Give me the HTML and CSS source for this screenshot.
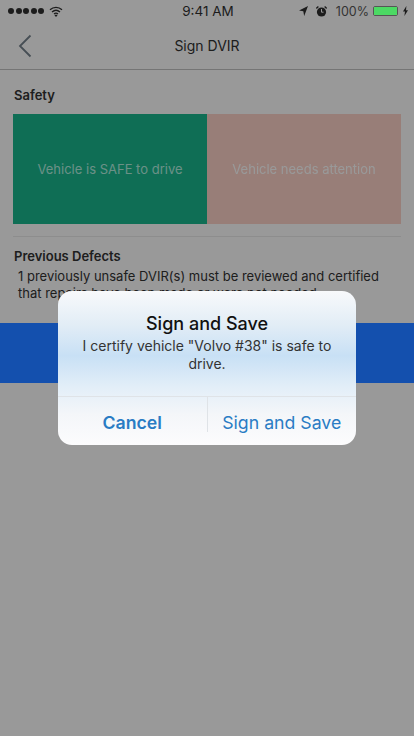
FILE: index.html
```html
<!DOCTYPE html>
<html lang="en">
<head>
  <meta charset="UTF-8">
  <meta name="viewport" content="width=device-width, initial-scale=1.0">
  <title>Sign DVIR</title>
  <link rel="stylesheet" href="styles.css">
</head>
<body>
  <div class="status-bar">
    <div class="status-left">
      <span class="signal"><i></i><i></i><i></i><i></i><i></i></span>
      <svg class="wifi" width="14" height="11" viewBox="0 0 14 11">
        <path d="M1 3.8C4.5.6 9.5.6 13 3.8M3 6c2.4-2.1 5.6-2.1 8 0M5 8c1.2-1 2.8-1 4 0" fill="none" stroke="#1c1c1c" stroke-width="1.3"/>
        <path d="M7 11 5.5 9.3c.9-.6 2.1-.6 3 0z" fill="#1c1c1c"/>
      </svg>
    </div>
    <div class="status-time">9:41 AM</div>
    <div class="status-right">
      <svg width="9" height="10" viewBox="0 0 9 10"><path d="M9 0 5.2 10 4.3 5.2 0 4.4z" fill="#1c1c1c"/></svg>
      <svg class="alarm" width="11" height="11" viewBox="0 0 11 11">
        <circle cx="5.5" cy="6" r="4.6" fill="#1c1c1c"/>
        <path d="M5.5 3v3.2h2" fill="none" stroke="#999" stroke-width="1"/>
        <path d="M.3 2.4 2.4.5M10.7 2.4 8.6.5" stroke="#1c1c1c" stroke-width="1.3"/>
      </svg>
      <span class="battery-pct">100%</span>
      <span class="battery"><span class="battery-fill"></span></span>
      <svg class="bolt" width="5" height="10" viewBox="0 0 5 10"><path d="M3.4 0 0 5.6h2L1.4 10 5 4.2H3z" fill="#1c1c1c"/></svg>
    </div>
  </div>

  <div class="page">
    <header class="nav">
      <svg class="back" width="14" height="24" viewBox="0 0 14 24"><path d="M12.5 1.5 2 12l10.5 10.5" fill="none" stroke="#76828d" stroke-width="1.8"/></svg>
      <h1>Sign DVIR</h1>
    </header>

    <section class="safety">
      <h2>Safety</h2>
      <div class="tiles">
        <div class="tile tile-safe">Vehicle is SAFE to drive</div>
        <div class="tile tile-attention"><span>Vehicle needs attention</span></div>
      </div>
    </section>

    <section class="defects">
      <h2>Previous Defects</h2>
      <p>1 previously unsafe DVIR(s) must be reviewed and certified that repairs have been made or were not needed.</p>
    </section>

    <div class="sign-bar"></div>
  </div>

  <div class="scrim">
    <div class="alert">
      <div class="alert-body">
        <h3>Sign and Save</h3>
        <p>I certify vehicle "Volvo #38" is safe to drive.</p>
      </div>
      <div class="alert-actions">
        <button class="btn-cancel">Cancel</button>
        <button class="btn-save">Sign and Save</button>
      </div>
    </div>
  </div>
</body>
</html>
```

FILE: styles.css
```css
/* Page */
html, body {
  margin: 0;
  padding: 0;
}

body {
  width: 414px;
  height: 736px;
  overflow: hidden;
  background: #fff;
  color: #333;
  font-family: Inter, "Liberation Sans", Arial, sans-serif;
}

h1, h2, h3, p {
  margin: 0;
}

/* Status bar sits above the dimmed layer */
.status-bar {
  position: relative;
  z-index: 2;
  height: 22px;
  padding: 0 6px 0 8px;
  box-sizing: border-box;
  display: grid;
  grid-template-columns: 1fr auto 1fr;
  align-items: center;
  color: #1c1c1c;
  font-size: 13.5px;
}

.status-left {
  display: flex;
  align-items: center;
  gap: 5px;
}

.signal {
  display: flex;
  gap: 1.5px;
}

.signal i {
  width: 6px;
  height: 6px;
  border-radius: 50%;
  background: #1c1c1c;
}

.status-time {
  text-align: center;
}

.status-right {
  display: flex;
  align-items: center;
  justify-content: flex-end;
}

.alarm {
  margin-left: 8px;
}

.battery-pct {
  margin-left: 9px;
  font-size: 12.5px;
  color: #333;
}

.battery {
  margin-left: 4px;
  width: 23px;
  height: 8px;
  padding: 0;
  border: 1px solid #555;
  border-radius: 2px;
  box-sizing: content-box;
}

.battery-fill {
  display: block;
  width: 100%;
  height: 100%;
  background: #4cd964;
}

.bolt {
  margin-left: 5px;
}

/* Content underneath the alert */
.nav {
  height: 47px;
  border-bottom: 1px solid #c4c4c4;
  display: flex;
  align-items: center;
  justify-content: center;
  position: relative;
}

.nav h1 {
  font-size: 14px;
  font-weight: normal;
}

.back {
  position: absolute;
  left: 18px;
  top: 12px;
}

.safety {
  padding: 17px 13px 0;
}

.safety h2,
.defects h2 {
  padding-left: 1px;
  font-size: 13px;
  font-weight: 600;
  line-height: 17px;
}

.tiles {
  display: flex;
  margin-top: 10px;
}

.tile {
  flex: 1;
  height: 110px;
  display: flex;
  align-items: center;
  justify-content: center;
  font-size: 13px;
}

.tile-safe {
  background: #19b88e;
  color: #b4f0e0;
}

.tile-attention {
  background: #fdd2c8;
  color: #fff;
}

.tile-attention span {
  filter: blur(0.5px);
}

.defects {
  margin: 12px 13px 0;
  padding-top: 11px;
  border-top: 1px solid #ebebeb;
}

.defects p {
  margin-top: 3px;
  padding-left: 5px;
  font-size: 13px;
  line-height: 17px;
}

/* stays bright through the dimmed layer, like the reference */
.sign-bar {
  position: relative;
  z-index: 2;
  margin-top: 21px;
  height: 60px;
  background: #1450ae;
}

/* Alert */
.scrim {
  position: absolute;
  inset: 0;
  background: rgba(0, 0, 0, 0.4);
  display: flex;
  align-items: center;
  justify-content: center;
}

.alert {
  position: relative;
  z-index: 3;
  width: 298px;
  height: 154px;
  border-radius: 14px;
  overflow: hidden;
  background: linear-gradient(to bottom, #f8f9fb 0%, #e2edf6 22%, #c8e0f5 42%, #e2eef8 62%, #f4f6f9 80%, #fcfcfd 100%);
  display: flex;
  flex-direction: column;
}

.alert-body {
  height: 106px;
  padding-top: 21px;
  box-sizing: border-box;
  text-align: center;
  border-bottom: 1px solid #dfe3e7;
}

.alert-body h3 {
  font-size: 18px;
  font-weight: 500;
  line-height: 24px;
  color: #111;
}

.alert-body p {
  padding: 1px 20px 0;
  font-size: 14px;
  line-height: 18px;
  color: #333;
}

.alert-actions {
  flex: 1;
  display: flex;
}

.alert-actions button {
  flex: 1;
  border: none;
  background: none;
  padding: 2px 0 0;
  font-family: inherit;
  font-size: 17.7px;
  color: #2a7cc4;
}

.alert-actions .btn-cancel {
  font-weight: 600;
  border-right: 1px solid;
  border-image: linear-gradient(to bottom, #dfe3e7 72%, transparent 72%) 1;
}
```
